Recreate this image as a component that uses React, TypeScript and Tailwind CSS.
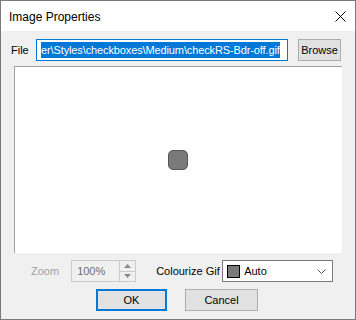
import React from "react";

const font = { fontFamily: '"Liberation Sans", Arial, sans-serif' };

export default function App() {
  return (
    <div
      className="w-[356px] h-[320px] border border-[#7a7a7a] bg-[#f0f0f0] flex flex-col text-[11px] text-black"
      style={font}
    >
      {/* title bar */}
      <div className="h-[30px] bg-white flex items-center justify-between pl-[8px] pr-[9px]">
        <span className="text-[12px] mt-[1px]">Image Properties</span>
        <svg width="11" height="11" viewBox="0 0 11 11" className="mt-[1px]">
          <path d="M0.5 0.5 L10.5 10.5 M10.5 0.5 L0.5 10.5" stroke="#000" strokeWidth="1" />
        </svg>
      </div>

      {/* file row */}
      <div className="flex items-center mt-[8px] pl-[10px]">
        <span className="w-[25px] shrink-0">File</span>
        <div className="w-[252px] shrink-0 h-[22px] border border-[#0078d7] bg-white flex items-center overflow-hidden pl-[4px] pr-[1px]">
          <span className="bg-[#0078d7] text-white whitespace-nowrap leading-[16px] tracking-[-0.12px]">
            er\Styles\checkboxes\Medium\checkRS-Bdr-off.gif
          </span>
        </div>
        <button className="ml-[10px] w-[43px] h-[22px] border border-[#adadad] bg-[#e1e1e1] text-[11px] flex items-center justify-center">
          Browse
        </button>
      </div>

      {/* preview */}
      <div className="ml-[13px] mt-[5px] w-[328px] h-[187px] bg-white border-t border-l border-[#a0a0a0] flex items-center justify-center">
        <div className="w-[20px] h-[20px] rounded-[5px] bg-[#7a7a7a] border border-[#555] ml-[-1px]" />
      </div>

      {/* zoom / colourize row */}
      <div className="flex items-center mt-[7px] h-[22px]">
        <span className="ml-[30px] text-[#a0a0a0]">Zoom</span>
        <div className="ml-[12px] w-[65px] h-[22px] border border-[#cccccc] flex">
          <span className="flex-1 text-[#6d6d6d] pl-[5px] leading-[20px]">100%</span>
          <div className="w-[16px] flex flex-col border-l border-[#cccccc]">
            <div className="flex-1 flex items-center justify-center border-b border-[#cccccc]">
              <svg width="7" height="4" viewBox="0 0 7 4">
                <path d="M0 4 L3.5 0 L7 4 Z" fill="#8a8a8a" />
              </svg>
            </div>
            <div className="flex-1 flex items-center justify-center">
              <svg width="7" height="4" viewBox="0 0 7 4">
                <path d="M0 0 L3.5 4 L7 0 Z" fill="#8a8a8a" />
              </svg>
            </div>
          </div>
        </div>
        <span className="ml-[20px] w-[66px] shrink-0">Colourize Gif</span>
        <div className="w-[111px] h-[22px] border border-[#7a7a7a] bg-white flex items-center pl-[4px] pr-[6px]">
          <div className="w-[13px] h-[13px] bg-[#7a7a7a] border border-black" />
          <span className="ml-[4px] flex-1">Auto</span>
          <svg width="9" height="5" viewBox="0 0 9 5">
            <path d="M0.5 0.5 L4.5 4.5 L8.5 0.5" stroke="#555" strokeWidth="1" fill="none" />
          </svg>
        </div>
      </div>

      {/* buttons */}
      <div className="flex mt-[7px]">
        <button className="ml-[95px] w-[71px] h-[22px] border-2 border-[#0078d7] bg-[#e1e1e1] text-[11px] flex items-center justify-center">
          OK
        </button>
        <button className="ml-[18px] w-[73px] h-[22px] border border-[#adadad] bg-[#e1e1e1] text-[11px] flex items-center justify-center">
          Cancel
        </button>
      </div>
    </div>
  );
}
